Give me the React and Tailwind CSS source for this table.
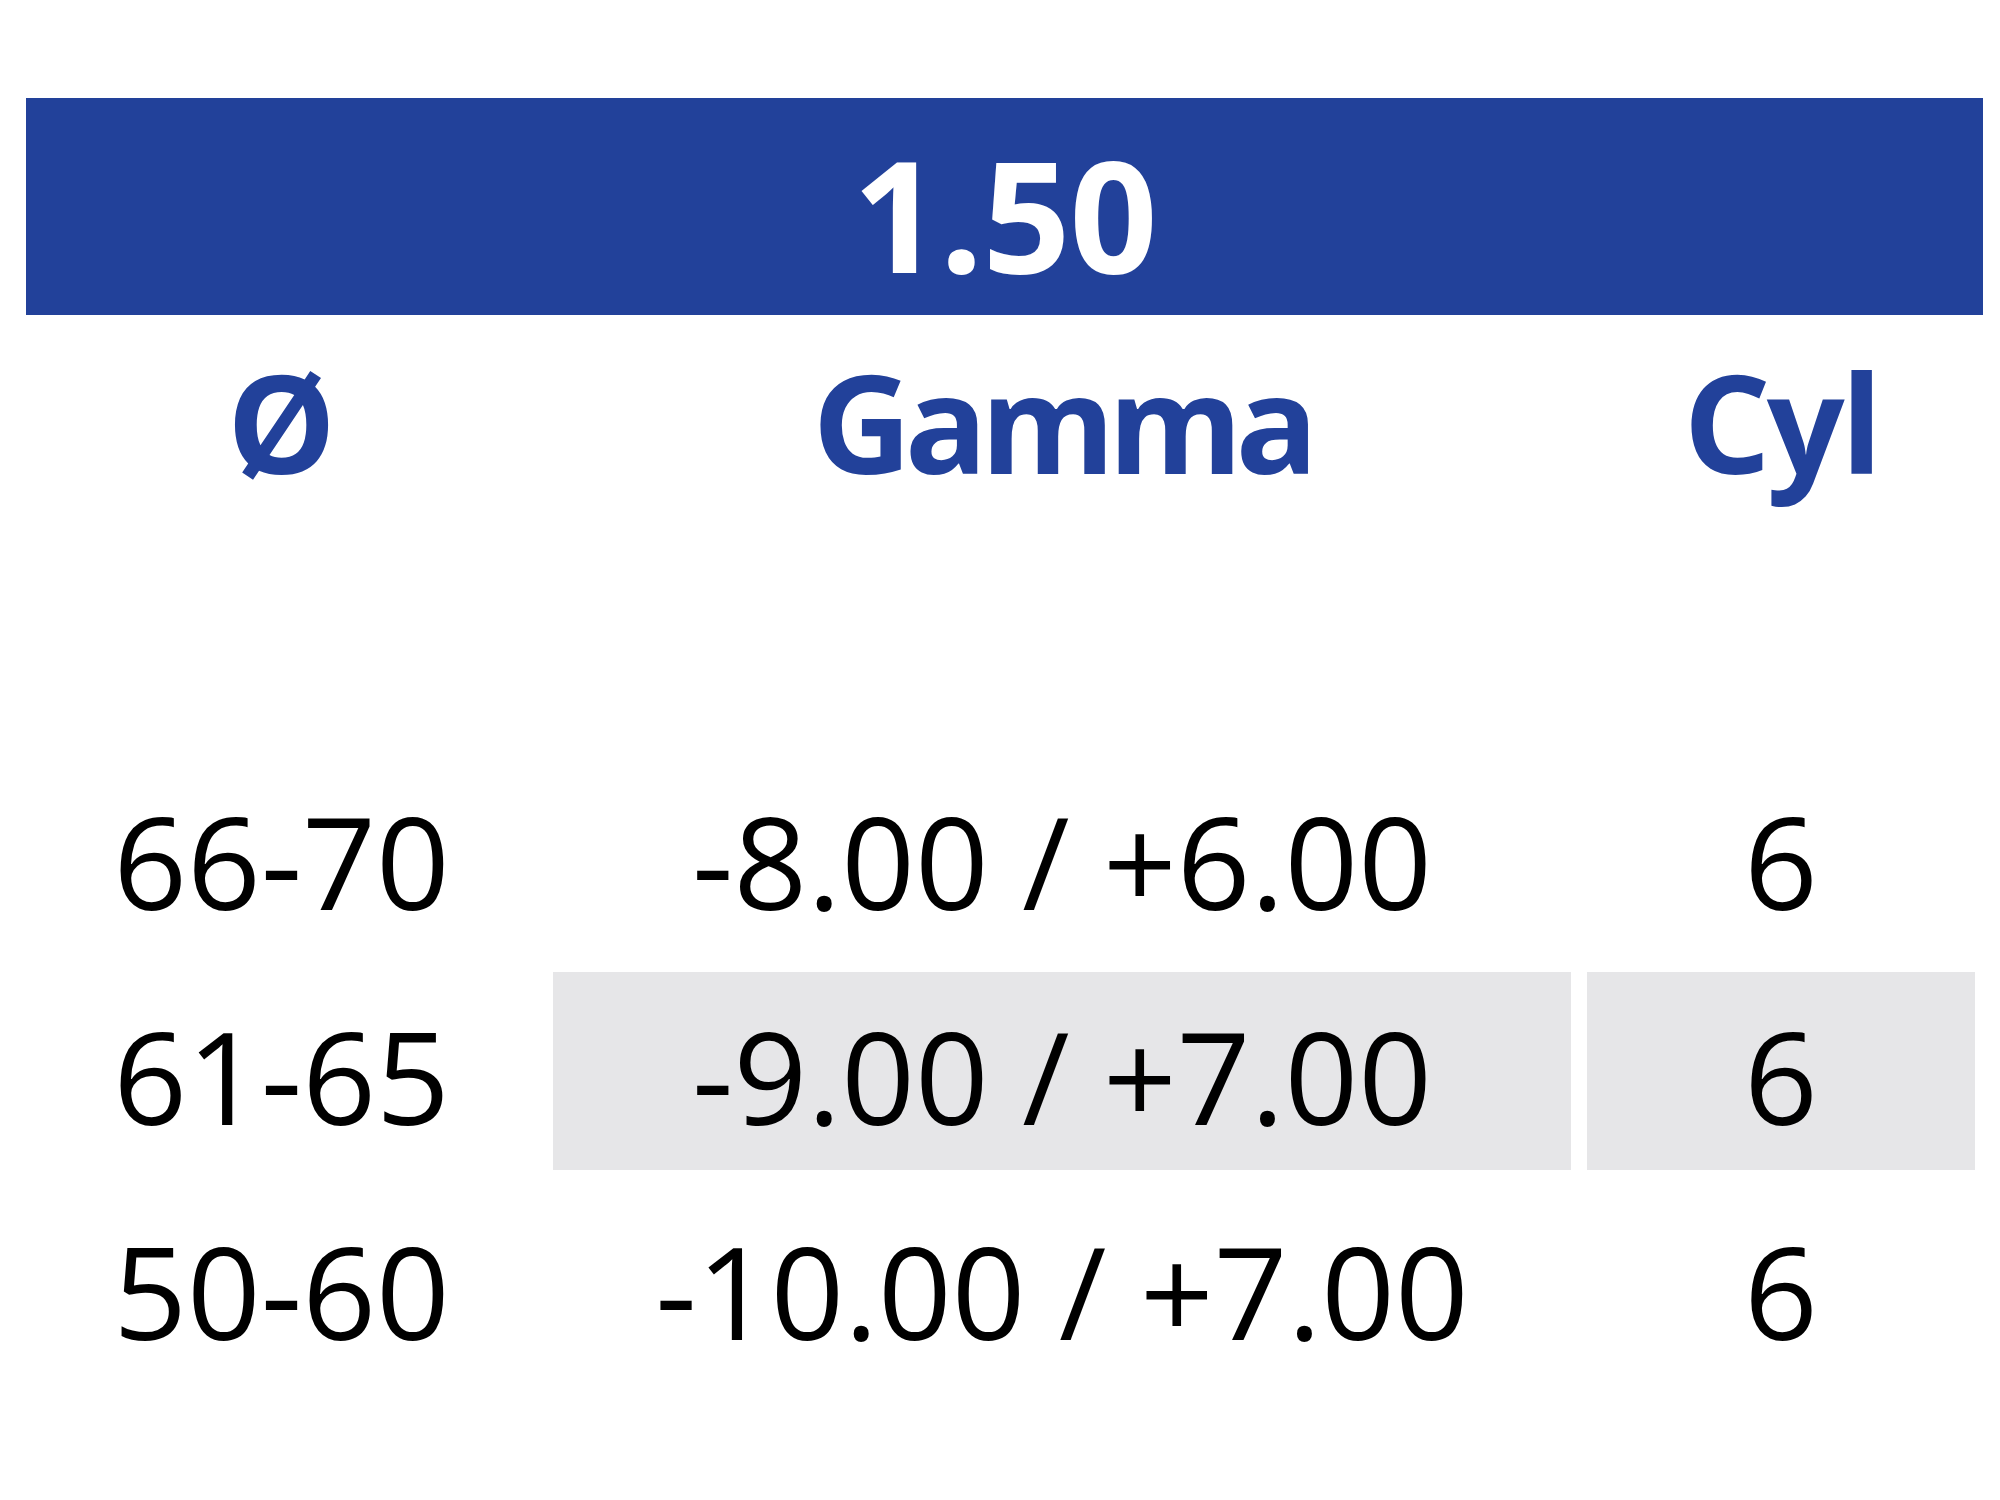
import React from 'react';

const rows = [
  { size: '66-70', range: '-8.00 / +6.00', cyl: '6', shaded: false },
  { size: '61-65', range: '-9.00 / +7.00', cyl: '6', shaded: true },
  { size: '50-60', range: '-10.00 / +7.00', cyl: '6', shaded: false },
];

const App = () => {
  return (
    <div className="w-[2000px] h-[1500px] bg-white pt-[98px] font-['Open_Sans','Noto_Sans',sans-serif]">
      {/* index title bar */}
      <div className="ml-[26px] w-[1957px] h-[217px] bg-[#22419a] flex items-center justify-center pt-[12px]">
        <span className="text-white font-bold text-[154px] leading-none tracking-[-1px]">1.50</span>
      </div>

      <div className="ml-[26px] grid grid-cols-[511px_1018px_388px] gap-x-[16px] mt-[38px]">
        <div className="text-center text-[#22419a] font-bold text-[137px] leading-none">Ø</div>
        <div className="text-center text-[#22419a] font-bold text-[137px] leading-none tracking-[-7px]">Gamma</div>
        <div className="text-center text-[#22419a] font-bold text-[137px] leading-none tracking-[-4px]">Cyl</div>
      </div>

      <div className="ml-[26px] mt-[267px] flex flex-col gap-y-[17px]">
        {rows.map((r) => (
          <div key={r.size} className="grid grid-cols-[511px_1018px_388px] gap-x-[16px] h-[198px] text-black text-[129px] leading-none">
            <div className="flex items-center justify-center pt-2">{r.size}</div>
            <div className={`flex items-center justify-center pt-2 ${r.shaded ? 'bg-[#e6e6e8]' : ''}`}>{r.range}</div>
            <div className={`flex items-center justify-center pt-2 ${r.shaded ? 'bg-[#e6e6e8]' : ''}`}>{r.cyl}</div>
          </div>
        ))}
      </div>
    </div>
  );
};

export default App;
